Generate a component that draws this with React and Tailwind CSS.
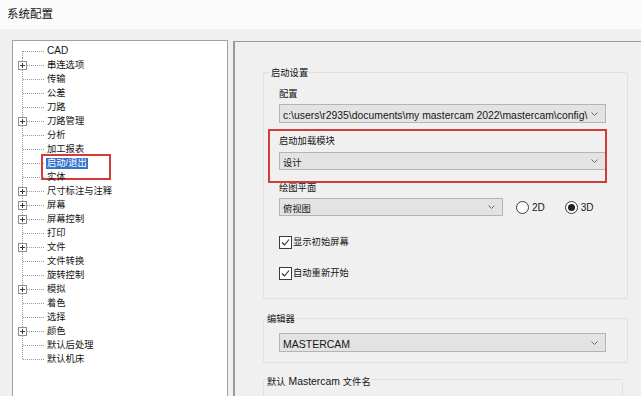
import React from "react";

const items = [
  { t: "CAD", plus: false, latin: true },
  { t: "串连选项", plus: true },
  { t: "传输", plus: false },
  { t: "公差", plus: false },
  { t: "刀路", plus: false },
  { t: "刀路管理", plus: true },
  { t: "分析", plus: false },
  { t: "加工报表", plus: false },
  { t: "启动/退出", plus: false, sel: true },
  { t: "实体", plus: false },
  { t: "尺寸标注与注释", plus: true },
  { t: "屏幕", plus: true },
  { t: "屏幕控制", plus: true },
  { t: "打印", plus: false },
  { t: "文件", plus: true },
  { t: "文件转换", plus: false },
  { t: "旋转控制", plus: false },
  { t: "模拟", plus: true },
  { t: "着色", plus: false },
  { t: "选择", plus: false },
  { t: "颜色", plus: true },
  { t: "默认后处理", plus: false },
  { t: "默认机床", plus: false },
];

function Connector({ first, last, plus }) {
  return (
    <svg width="34" height="14" className="shrink-0 block">
      <line
        x1="9.5"
        y1={first ? 7 : 0}
        x2="9.5"
        y2={last ? 8 : 14}
        stroke="#9a9a9a"
        strokeDasharray="1 1"
      />
      <line x1="10" y1="7.5" x2="31" y2="7.5" stroke="#9a9a9a" strokeDasharray="1 1" />
      {plus && (
        <g>
          <rect x="5.5" y="3.5" width="8" height="8" fill="#ffffff" stroke="#8e8e8e" />
          <line x1="7" y1="7.5" x2="12" y2="7.5" stroke="#3a3a3a" />
          <line x1="9.5" y1="5" x2="9.5" y2="10" stroke="#3a3a3a" />
        </g>
      )}
    </svg>
  );
}

function Chevron() {
  return (
    <svg width="7" height="4" className="shrink-0 mr-[7px]">
      <polyline points="0.5,0.5 3.5,3.5 6.5,0.5" fill="none" stroke="#6a6a6a" strokeWidth="1" />
    </svg>
  );
}

function Combo({ children, className = "" }) {
  return (
    <div
      className={
        "flex items-center bg-[#e3e3e3] border border-[#b4b4b4] " + className
      }
    >
      <div className="flex-1 min-w-0 overflow-hidden whitespace-nowrap pl-[3px] text-[#161616]">
        {children}
      </div>
      <Chevron />
    </div>
  );
}

function Check({ label }) {
  return (
    <div className="flex items-center h-[13px]">
      <div className="w-[13px] h-[13px] border border-[#3a3a3a] bg-white flex items-center justify-center">
        <svg width="11" height="11">
          <polyline points="2,5.5 4.5,8 9,2.5" fill="none" stroke="#2a2a2a" strokeWidth="1.1" />
        </svg>
      </div>
      <span className="ml-[1px] text-[9.3px] leading-[13px] text-[#161616]">{label}</span>
    </div>
  );
}

function Radio({ label, on }) {
  return (
    <div className="flex items-center">
      <div className="w-[13px] h-[13px] rounded-full border border-[#3a3a3a] bg-white flex items-center justify-center">
        {on && <div className="w-[7px] h-[7px] rounded-full bg-[#222]" />}
      </div>
      <span className="ml-[3px] text-[10px] leading-[13px] text-[#161616]">{label}</span>
    </div>
  );
}

export default function App() {
  return (
    <div className="w-[641px] h-[396px] overflow-hidden bg-white font-['Liberation_Sans','Noto_Sans_CJK_SC',sans-serif] text-[#141414]">
      <div className="h-[29px] flex items-center pl-[7px] pt-[1px] text-[11.5px] bg-[#fbfbfb]">
        系统配置
      </div>
      <div className="h-[367px] flex bg-[#f0f0f0] pl-[12px] pt-[11px]">
        {/* Tree */}
        <div className="w-[216px] shrink-0 bg-white border-l border-t border-r border-[#a0a0a0] pt-[3px]">
          {items.map((it, i) => (
            <div key={it.t} className="relative flex items-center h-[14px]">
              <Connector first={i === 0} last={i === items.length - 1} plus={it.plus} />
              {it.sel ? (
                <span className="bg-[#3273cc] text-white text-[9.3px] leading-[11px] px-[1px] -ml-[1px]">
                  {it.t}
                </span>
              ) : (
                <span className={(it.latin ? "text-[10px]" : "text-[9.3px]") + " leading-[14px] text-[#141414]"}>
                  {it.t}
                </span>
              )}
              {it.sel && (
                <div className="absolute left-[28px] top-[-2px] w-[70px] h-[26px] border-2 border-[#d33b3b] pointer-events-none" />
              )}
            </div>
          ))}
        </div>

        {/* Right panel */}
        <div className="ml-[5px] mt-[1px] flex-1 border-t border-l-2 border-[#9a9a9a] bg-[#f0f0f0] pl-[28px] pr-[13px]">
          {/* Group 1 */}
          <div className="relative mt-[30px] border border-[#e0e0e0] rounded-[2px] pl-[15px] pr-[21px] pt-[15px] pb-[18px]">
            <span className="absolute top-[-6px] left-[6px] px-[1px] bg-[#f0f0f0] text-[9.3px] leading-[12px]">
              启动设置
            </span>
            <div className="text-[9.3px] leading-[12px]">配置</div>
            <Combo className="mt-[4px] h-[19px]">
              <span className="text-[10.4px] leading-[17px]">
                c:\users\r2935\documents\my mastercam 2022\mastercam\config\
              </span>
            </Combo>
            <div className="relative mt-[12px]">
              <div className="text-[9.3px] leading-[12px]">启动加载模块</div>
              <Combo className="mt-[5px] h-[18px]">
                <span className="text-[9.3px] leading-[16px]">设计</span>
              </Combo>
              <div className="absolute left-[-11px] right-[-1px] top-[-6px] bottom-[-13px] border-2 border-[#d33b3b] pointer-events-none" />
            </div>
            <div className="mt-[12px] text-[9.3px] leading-[12px]">绘图平面</div>
            <div className="mt-[4px] flex items-center">
              <Combo className="w-[224px] h-[18px]">
                <span className="text-[9.3px] leading-[16px]">俯视图</span>
              </Combo>
              <div className="ml-[13px]">
                <Radio label="2D" />
              </div>
              <div className="ml-[20px]">
                <Radio label="3D" on />
              </div>
            </div>
            <div className="mt-[20px]">
              <Check label="显示初始屏幕" />
            </div>
            <div className="mt-[18px]">
              <Check label="自动重新开始" />
            </div>
          </div>

          {/* Group 2 */}
          <div className="relative mt-[19px] border border-[#e0e0e0] rounded-[2px] pl-[15px] pr-[21px] pt-[14px] pb-[10px]">
            <span className="absolute top-[-6px] left-[2px] px-[1px] bg-[#f0f0f0] text-[9.3px] leading-[12px]">
              编辑器
            </span>
            <Combo className="h-[19px]">
              <span className="text-[10.5px] leading-[17px]">MASTERCAM</span>
            </Combo>
          </div>

          {/* Group 3 */}
          <div className="relative mt-[16px] mr-[5px] h-[40px] border border-[#e0e0e0] rounded-[2px]">
            <span className="absolute top-[-6px] left-[2px] px-[1px] bg-[#f0f0f0] leading-[12px] whitespace-nowrap">
              <span className="text-[9.3px]">默认</span>
              <span className="text-[10.4px]"> Mastercam </span>
              <span className="text-[9.3px]">文件名</span>
            </span>
          </div>
        </div>
      </div>
    </div>
  );
}
